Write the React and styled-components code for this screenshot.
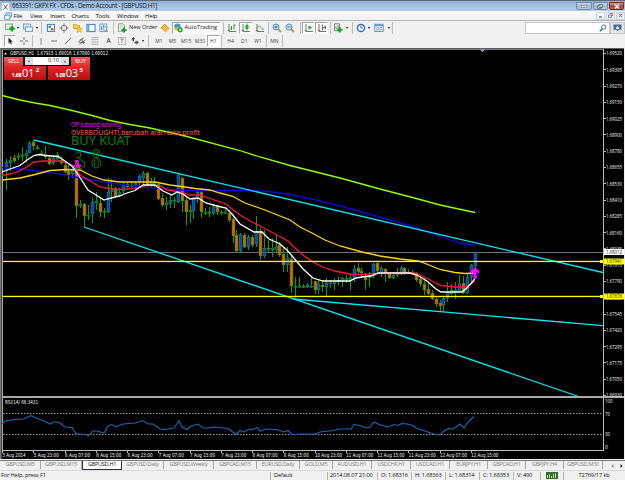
import React from "react";
import styled, { createGlobalStyle } from "styled-components";

const GlobalStyle = createGlobalStyle`
  * {
    box-sizing: border-box;
  }
  body {
    margin: 0;
    overflow: hidden;
    background: #f0f0f0;
  }
`;

const Window = styled.div`
  display: flex;
  flex-direction: column;
  width: 625px;
  height: 480px;
  background: #f0f0f0;
  font-family: "Open Sans", "Noto Sans", sans-serif;
  font-size: 6px;
  line-height: 1;
  color: #222;
  white-space: nowrap;
`;

const TitleBar = styled.div`
  display: flex;
  align-items: center;
  height: 11px;
  padding: 1px 1px 0 2px;
  border-top: 1px solid #5c6b7b;
  background: linear-gradient(#91afd2, #a3bfdf 40%, #b5cde8);
`;

const Title = styled.div`
  flex: 1;
  padding-left: 3px;
  font-size: 6.2px;
  letter-spacing: -0.27px;
  color: #101820;
`;

const WinButtons = styled.div`
  display: flex;
  align-self: flex-start;
  gap: 1px;
`;

const WinButton = styled.div`
  display: flex;
  align-items: center;
  justify-content: center;
  width: ${(p) => (p.$close ? 15 : 15.5)}px;
  height: 8px;
  border: 1px solid ${(p) => (p.$close ? "#7a3029" : "#7089a6")};
  border-radius: 0 0 2px 2px;
  background: ${(p) =>
    p.$close
      ? "linear-gradient(#dc9a8c, #c94029 50%, #c3513c)"
      : "linear-gradient(#c4d5e8, #9fb8d4 50%, #b4cbe4)"};
`;

const MenuBar = styled.div`
  display: flex;
  align-items: center;
  height: 10px;
  padding-left: 2px;
  border-bottom: 1px solid #b5b5b5;
  background: linear-gradient(#fafafa, #f0f0f0);
`;

const MenuItem = styled.div`
  width: ${(p) => p.$w}px;
  font-size: 6px;
  letter-spacing: -0.2px;
  color: #111;
`;

const ChildButton = styled.div`
  display: flex;
  align-items: center;
  justify-content: center;
  width: 9px;
  height: 8px;
  margin-left: 1px;
  border: 1px solid #c3d3e4;
  background: #f1f6fb;
`;

const Spacer = styled.div`
  flex: 1;
`;

const ToolBar = styled.div`
  display: flex;
  align-items: center;
  height: ${(p) => p.$h}px;
  padding-left: 3px;
  border-left: 1px solid #fff;
`;

const Tool = styled.div`
  display: flex;
  flex: none;
  align-items: center;
  justify-content: ${(p) => (p.$start ? "flex-start" : "center")};
  width: ${(p) => p.$w}px;
  height: 12px;
  border: 1px solid transparent;
  ${(p) =>
    p.$on &&
    `
    border-color: #a8a8a8 #fff #fff #a8a8a8;
    background: #fafafa;
  `}
  font-size: ${(p) => p.$size || 6}px;
  color: ${(p) => p.$color || "#222"};
  svg {
    flex: none;
    display: block;
  }
`;

const Caret = styled.i`
  flex: none;
  width: ${(p) => p.$w || 4}px;
  &::after {
    content: "";
    display: block;
    width: 0;
    margin: 0 auto;
    border: 1.5px solid transparent;
    border-top: 2px solid #111;
    border-bottom: 0;
  }
`;

const Divider = styled.i`
  flex: none;
  width: ${(p) => p.$w}px;
  height: 12px;
  &::after {
    content: "";
    display: block;
    width: 1px;
    height: 100%;
    margin: 0 auto;
    background: #bdbdbd;
  }
`;

const Search = styled.div`
  display: flex;
  align-items: center;
  justify-content: flex-end;
  width: 85px;
  height: 12px;
  padding-right: 2px;
  border: 1px solid #c6c6c6;
  background: #fff;
`;

const Chat = styled.div`
  display: flex;
  align-items: center;
  justify-content: center;
  width: 15px;
  height: 12px;
  border: 1px solid #c6c6c6;
  background: #e4e4e4;
`;

const ChartArea = styled.div`
  position: relative;
  height: 412px;
  svg {
    display: block;
  }
`;

const TradePanel = styled.div`
  position: absolute;
  left: 4px;
  top: 9px;
  width: 86px;
  color: #fff;
`;

const TradeRow = styled.div`
  display: flex;
  justify-content: space-between;
  height: ${(p) => p.$h}px;
`;

const TradeButton = styled.div`
  display: flex;
  align-items: center;
  justify-content: center;
  width: 19px;
  background: linear-gradient(#f85a5a, #e22c2c);
  font-size: 5.6px;
  letter-spacing: -0.1px;
`;

const Volume = styled.div`
  display: flex;
  align-items: center;
  justify-content: space-between;
  width: 44px;
  height: 8px;
  background: #fff;
  color: #111;
  font-size: 5.6px;
  span {
    flex: 1;
    padding-right: 2px;
    text-align: right;
  }
`;

const Step = styled.div`
  display: flex;
  align-items: center;
  justify-content: center;
  width: 8px;
  height: 8px;
  background: #d9dde4;
`;

const Quote = styled.div`
  display: flex;
  align-items: baseline;
  justify-content: center;
  width: 42.3px;
  gap: 0.5px;
  background: linear-gradient(#e02a2a, #b80d10);
  font-size: 5.6px;
  font-weight: 700;
  letter-spacing: -0.3px;
  line-height: 13px;
  b {
    font-size: 11px;
    font-weight: 400;
    letter-spacing: -0.2px;
  }
  sup {
    align-self: flex-start;
    margin-left: 1px;
    font-size: 6px;
    line-height: 9px;
  }
`;

const Tabs = styled.div`
  display: flex;
  height: 10px;
  border-top: 1px solid #777;
  background: #f0f0f0;
  font-size: 5.5px;
`;

const Tab = styled.div`
  display: flex;
  align-items: center;
  justify-content: center;
  width: ${(p) => p.$w}px;
  height: ${(p) => (p.$active ? 9 : 8)}px;
  letter-spacing: -0.26px;
  color: ${(p) => (p.$active ? "#111" : "#7c7c7c")};
  border: 0 solid #333;
  ${(p) =>
    p.$active
      ? "background: #fff; border-width: 0 1px 1px;"
      : "border-right: 1px solid #a5a5a5;"}
`;

const TabArrows = styled.div`
  display: flex;
  align-items: center;
  gap: 6px;
  padding-left: 8px;
`;

const StatusBar = styled.div`
  display: flex;
  align-items: center;
  height: 10px;
  border-top: 1px solid #dadada;
  color: #111;
  font-size: 5.7px;
  letter-spacing: -0.15px;
`;

const Status = styled.div`
  display: flex;
  align-items: center;
  justify-content: ${(p) => (p.$center ? "center" : "flex-start")};
  width: ${(p) => p.$w}px;
  height: 8px;
  padding-left: ${(p) => (p.$center ? 0 : p.$pad || 3)}px;
  border-right: ${(p) => (p.$last ? 0 : 1)}px solid #b4b4b4;
`;

const ICONS = {
  newChart: (
    <>
      <rect x="0.5" y="1" width="7" height="5.5" fill="#dff0df" stroke="#6d8f8c" strokeWidth="0.8" />
      <path d="M4.2 5.7h5.6M7 3v5.6" stroke="#12a51b" strokeWidth="2.2" />
    </>
  ),
  profiles: (
    <>
      <rect x="0.5" y="1" width="7" height="5" fill="#d6e8f8" stroke="#5c8fbd" strokeWidth="0.8" />
      <rect x="2.5" y="4" width="7" height="4.5" fill="#eaf4fc" stroke="#5c8fbd" strokeWidth="0.8" />
    </>
  ),
  market: (
    <>
      <rect x="1.4" y="1.4" width="7" height="7" fill="#fff" stroke="#2d84d2" />
      <path d="M2.6 2.6h2.4v2.4H2.6z" fill="#25a244" />
      <path d="M5 5h2.4v2.4H5z" fill="#e2552c" />
    </>
  ),
  target: (
    <>
      <circle cx="5" cy="5" r="2.8" fill="none" stroke="#777" strokeWidth="0.9" />
      <path d="M5 0.5v3M5 6.5v3M0.5 5h3M6.5 5h3" stroke="#777" strokeWidth="0.9" />
    </>
  ),
  navigator: (
    <>
      <path d="M0.5 1.5h3l1 1h2v3h-6z" fill="#f5cb50" stroke="#b98d1b" strokeWidth="0.6" />
      <path d="M6 3.5l1.2 1.8 2.2.4-1.6 1.5.3 2.1-2-1-2.1 1 .4-2.1L3 5.7l2-.4z" fill="#ffce3a" stroke="#b98d1b" strokeWidth="0.5" />
    </>
  ),
  terminal: (
    <>
      <rect x="1" y="1.4" width="8" height="7.2" fill="#fff" stroke="#3a76b8" />
      <path d="M1.5 1.5h2v7h-2z" fill="#67a4dc" />
    </>
  ),
  tester: (
    <>
      <rect x="0.8" y="1" width="7" height="7.5" fill="#d9e8f5" stroke="#6692bb" strokeWidth="0.8" />
      <path d="M2.5 7V3M4.5 6V2M6 7V4" stroke="#4b7cab" strokeWidth="0.8" />
      <circle cx="5.8" cy="5.6" r="1.8" fill="#fff" stroke="#4777a8" strokeWidth="0.7" />
      <path d="M7 7l2 2" stroke="#b78a2a" />
    </>
  ),
  order: (
    <>
      <path d="M1.5.8h4.5l1.5 1.5v6h-6z" fill="#f7fbf5" stroke="#718b70" strokeWidth="0.8" />
      <path d="M2.5 3h3.5M2.5 5h2" stroke="#899" strokeWidth="0.6" />
      <path d="M4.5 7h5M7 4.5v5" stroke="#14a51a" strokeWidth="2" />
    </>
  ),
  book: (
    <>
      <path d="M4.5 1L9 5.6 5.6 9 1 5.2z" fill="#f0bd3c" stroke="#a97512" strokeWidth="0.7" />
      <path d="M1.2 5.6L5.6 9l3-2.7" fill="none" stroke="#fff1c6" strokeWidth="0.6" />
    </>
  ),
  auto: (
    <>
      <circle cx="4.5" cy="3.8" r="3.3" fill="#3f9fd0" />
      <path d="M.8 4.5h7.4L6.5 7.8H2.5z" fill="#e7b93a" />
      <circle cx="7.2" cy="6.8" r="2.6" fill="#1daa2c" />
      <path d="M6.5 5.4v2.8L8.7 6.8z" fill="#fff" />
    </>
  ),
  bars: (
    <>
      <path d="M2 1v7.5h7M0.8 7.5h2" fill="none" stroke="#555" strokeWidth="0.8" />
      <path d="M4.5 3v4M4.5 6H3.5M7 1.5v5M7 2.2h1.5" stroke="#27953a" />
    </>
  ),
  candles: (
    <>
      <path d="M2 1v7.5h7M0.8 7.5h2" fill="none" stroke="#555" strokeWidth="0.8" />
      <path d="M6 .5v7" stroke="#157b20" strokeWidth="0.8" />
      <rect x="4.5" y="2" width="3" height="4" fill="#1eb52b" />
    </>
  ),
  line: (
    <>
      <path d="M2 1v7.5h7M0.8 7.5h2" fill="none" stroke="#555" strokeWidth="0.8" />
      <path d="M2 5.5C4 2 5 2.5 6 4.5S8 6 9 6" fill="none" stroke="#47a957" strokeWidth="0.9" />
    </>
  ),
  zoomIn: (
    <>
      <path d="M6 6l3 3" stroke="#c59b29" strokeWidth="1.8" />
      <circle cx="4" cy="4" r="3" fill="#d8ecfa" stroke="#4a90cb" />
      <path d="M2.3 4h3.4M4 2.3v3.4" stroke="#2e73b3" />
    </>
  ),
  zoomOut: (
    <>
      <path d="M6 6l3 3" stroke="#c59b29" strokeWidth="1.8" />
      <circle cx="4" cy="4" r="3" fill="#d8ecfa" stroke="#4a90cb" />
      <path d="M2.3 4h3.4" stroke="#2e73b3" />
    </>
  ),
  scroll: (
    <>
      <path d="M2 1v7.5h7M0.8 7.5h2" fill="none" stroke="#555" strokeWidth="0.8" />
      <path d="M4.5 2.5v4L8 4.5z" fill="#1ca62b" />
    </>
  ),
  shift: (
    <>
      <path d="M2 1v7.5h7M0.8 7.5h2M5.5 1.5v6" fill="none" stroke="#555" strokeWidth="0.8" />
      <path d="M9 2.5v4L6 4.5z" fill="#3a78b8" />
      <path d="M6 4.5h3" stroke="#c44" strokeWidth="0.8" />
    </>
  ),
  indicator: (
    <>
      <path d="M1.5.8h5v7h-5z" fill="#eef4ee" stroke="#667" strokeWidth="0.8" />
      <path d="M3 6V3M5 6V2" stroke="#667" strokeWidth="0.7" />
      <path d="M4 6.8h5.4M6.7 4v5.6" stroke="#14a51a" strokeWidth="2" />
    </>
  ),
  clock: (
    <>
      <circle cx="5" cy="5" r="3.6" fill="#edf6fd" stroke="#2d73bc" strokeWidth="1.5" />
      <path d="M5 2.8V5h1.8" fill="none" stroke="#335" strokeWidth="0.7" />
    </>
  ),
  template: (
    <>
      <rect x="0.8" y="1.2" width="8.4" height="7.4" fill="#e7f1fa" stroke="#4e87bd" strokeWidth="0.8" />
      <path d="M1 1.4h8v1.8H1z" fill="#5d9ad3" />
      <path d="M2 5.5l1.5-1 1.5 1 2-1.3 1.3.8" fill="none" stroke="#c55" strokeWidth="0.6" />
      <path d="M2 7.3l2-.8 2 .6 2-.8" fill="none" stroke="#3a9a4a" strokeWidth="0.6" />
    </>
  ),
  cursor: <path d="M3.5 1.5v6l1.4-1.3 1 2.3 1-.5-1-2.2h1.8z" fill="#222" />,
  cross: <path d="M5 1v3M5 6v3M1 5h3M6 5h3" stroke="#666" strokeWidth="0.9" />,
  vline: <path d="M5 2v6.5" stroke="#777" strokeWidth="0.9" />,
  hline: <path d="M2 5h6" stroke="#666" strokeWidth="0.9" />,
  trend: <path d="M2 8l6-6" stroke="#555" strokeWidth="0.8" />,
  channel: (
    <path d="M1 6l6-4.5M2.5 8.5l6-4.5M3 3l4 5M5 2l1.5 6M2 6.5h6" stroke="#555" strokeWidth="0.7" />
  ),
  fibo: <path d="M1.5 1.5h7M1.5 3.7h7M1.5 6h7M1.5 8.2h7" stroke="#777" strokeWidth="0.7" strokeDasharray="1.3 .4" />,
  label: <rect x="1.5" y="1.5" width="7" height="7" fill="none" stroke="#777" strokeWidth="0.7" strokeDasharray="1 .6" />,
  arrows: (
    <>
      <path d="M1 3.5L3.3 1l2 2.3H4v2H2.5v-2z" fill="#444" />
      <path d="M4.5 5.5h2V4.3L9 6.5 6.5 8.7V7.5h-2z" fill="#555" />
    </>
  ),
};

const Glyph = ({ name }) => (
  <svg width="10" height="10" viewBox="0 0 10 10">
    {ICONS[name]}
  </svg>
);

// high, low, body top, body bottom, colour (b: up, o: down, g: doji)
const CANDLES = [
  [159, 190, 162, 171, "b"], [156, 171, 160, 163, "b"], [155, 163, 157.5, 161, "o"], [153, 160, 156, 157.5, "g"],
  [147, 161, 155, 156.5, "g"], [150, 163, 153, 156, "b"], [141, 153, 143, 153, "b"], [140, 150, 142, 146, "o"],
  [145, 150, 147, 149, "g"], [150, 155, 153, 154.5, "g"], [146, 159, 154, 157, "o"], [156, 165, 158, 164, "o"],
  [157, 165, 158, 163, "b"], [152, 160, 155, 159, "g"], [157, 165, 160, 163, "o"], [162, 173, 165, 172, "o"],
  [165, 180, 171, 176, "o"], [167, 178, 170, 174, "b"], [170, 218, 171, 206, "o"], [200, 208, 204, 206, "b"],
  [203, 227, 204, 216, "o"], [205, 220, 215, 216.5, "g"], [197, 223, 202, 214, "b"], [192, 210, 201, 203, "g"],
  [198, 217, 203, 212, "o"], [208, 218, 211, 212.5, "g"], [178, 213, 192, 212, "b"], [179, 202, 188, 192, "b"],
  [187, 197, 188, 196, "o"], [188, 197, 192, 196, "b"], [183, 194, 185, 191, "b"], [182, 188, 184, 187, "o"],
  [182, 189, 185, 187, "g"], [181, 188, 183, 186, "b"], [174, 187, 176, 182, "b"], [171, 185, 173, 178, "b"],
  [172, 187, 173, 185, "o"], [178, 187, 182, 184, "b"], [177, 187, 183, 184, "g"], [183, 200, 184, 199, "o"],
  [193, 207, 198, 205, "o"], [197, 210, 203, 205, "b"], [195, 208, 200, 204, "b"], [197, 208, 200, 201.5, "g"],
  [174, 203, 175, 202, "b"], [177, 212, 178, 201, "o"], [197, 225, 200, 212, "o"], [205, 223, 210, 212, "g"],
  [197, 219, 198, 211, "b"], [190, 203, 192, 199, "b"], [190, 218, 192, 212, "o"], [208, 215, 212, 213.5, "g"],
  [207, 217, 212, 213.5, "b"], [205, 215, 207, 213, "b"], [205, 215, 207, 212, "o"], [210, 215, 212, 213.5, "g"],
  [209, 214, 212, 213.5, "g"], [210, 222, 213, 220, "o"], [215, 243, 219, 236, "o"], [230, 252, 235, 251, "o"],
  [233, 253, 234, 251, "b"], [233, 248, 235, 247, "o"], [235, 250, 237, 247, "b"], [235, 247, 237, 245, "o"],
  [216, 247, 231, 244, "b"], [228, 260, 231, 256, "o"], [230, 258, 248, 256, "b"], [240, 252, 248, 249.5, "o"],
  [238, 257, 248, 250, "g"], [235, 252, 247, 250, "b"], [242, 257, 245, 255, "o"], [247, 272, 254, 265, "o"],
  [247, 272, 258, 265, "b"], [255, 293, 259, 286, "o"], [277, 298, 286, 287.5, "g"], [277, 288, 286, 287.5, "b"],
  [284, 288, 286, 287.5, "g"], [283, 288, 285, 287.5, "b"], [277, 288, 286, 287.5, "g"], [281, 294, 281, 290, "o"],
  [280, 294, 284, 290, "b"], [280, 292, 285, 287, "o"], [278, 297, 283, 287, "b"], [280, 288, 283, 284, "g"],
  [278, 290, 281, 284, "b"], [277, 285, 280, 282, "o"], [277, 287, 278, 281, "b"], [275, 283, 278, 279.5, "g"],
  [275, 290, 278, 280, "g"], [265, 282, 269, 279, "b"], [263, 273, 268, 272, "o"], [268, 278, 271, 273, "o"],
  [273, 290, 276, 280, "o"], [272, 287, 275, 278, "b"], [263, 278, 264, 276, "b"], [262, 273, 263, 271, "o"],
  [266, 277, 268, 273, "b"], [268, 282, 269, 273, "o"], [272, 279, 273, 278, "o"], [272, 279, 275, 278, "b"],
  [268, 277, 272, 275, "b"], [266, 275, 268, 273, "b"], [267, 275, 268, 273, "o"], [269, 273, 272, 273, "g"],
  [270, 275, 272, 273.5, "b"], [272, 282, 273, 280, "o"], [276, 287, 279, 284, "o"], [278, 295, 284, 290, "o"],
  [283, 295, 289, 294, "o"], [290, 300, 293, 299, "o"], [296, 307, 299, 304, "o"], [300, 312, 303, 306, "o"],
  [297, 311, 298, 305, "b"], [282, 302, 292, 298, "b"], [284, 295, 290, 294, "g"], [282, 299, 290, 293, "b"],
  [275, 292, 284, 291, "b"], [276, 294, 283, 293, "o"], [273, 294, 277, 293, "b"], [264, 282, 265, 277, "b"],
  [252, 279, 252.5, 266, "b"],
];

const BODY = { b: "#1030ff", o: "#ff5000", g: "#0a5a0a" };

const LINES = [
  { color: "#8fff00", d: "2,95.5 20,100 35,103 50,105.5 70,110 90,115 110,120.5 130,124.5 150,128 185,136 238,150 260,157 290,165.5 340,178 380,189 420,199.5 440,205 475,212.5" },
  { color: "#0a0adc", d: "2,167.5 30,170 60,174 80,178 105,182 125,185 140,186.5 155,188 170,189.5 185,190.5 240,190.5 265,191 290,194.5 316,200 340,206 365,213 390,220 415,227 430,233 445,238 460,243 475,245.5" },
  { color: "#ffd400", d: "2,180 20,178 35,174.5 50,170.5 65,169.5 80,170 92,176 104,180 120,182 155,182 170,185 185,187 195,188.5 210,190 220,193 232,196 245,203 265,210 290,220 300,227 312,233 325,240 340,246 362,252 380,256 400,259 418,261 428,264.5 440,269.5 455,272.5 465,273.5 475,273" },
  { color: "#ff1438", d: "2,175.5 15,173 25,168 34,162 43,161 60,161 72,165 80,175 92,182 100,187 115,189.5 127,189 138,188 148,185 160,186 168,190 180,192 190,195 200,195 210,198.5 226,204 232,209 240,215 250,221 262,227 275,234 288,241 294,247 303,255 313,262 323,267 335,271 352,274.5 370,274 385,273 415,273 422,276 432,281 441,285.5 455,287 465,287 471,284 475,281" },
  { color: "#fff", d: "2,172 10,169 20,165.5 27,160 34,155.5 39,154.5 45,155.5 58,156.5 65,161 73,167 79,176 88,190 96,195 104,200 107,199 115,197 120,196 127,193 135,190.5 143,185 155,185 163,191 172,195 177,192 183,194 190,199 198,198 206,203 215,205.5 226,208 232,214 240,224 254,232 262,232 269,239 280,244 287,250 293,257 303,269 313,278 323,281 350,281 356,278 365,276.5 371,276 378,273 410,273 417,275 427,281 436,289 441,292 462,292 468,287 474,280 476,276" },
];

const RSI =
  "2,424 5,421 14,419.5 24,419 31,415.5 36,418 44,421 50,424 54,421.5 60,423 65,427 72,427.5 76,434 81,434 89,435.5 93,431 97,431 104,433 108,426 112,424.5 116,427 123,424 135,423 143,420.5 148,424 153,424 160,429 165,429.5 174,428 179,420.5 182,427 187,429.5 191,426 198,424 203,428 209,428 214,427 228,428.5 236,434.5 240,430.5 244,432 249,429 252,430 257,427.5 260,431 266,429 276,429.5 284,432 288,430.5 292,434.5 304,434 315,434 320,432 333,430.5 340,429 351,429 354,424.5 360,425.5 366,428 370,427 374,422 379,424.5 388,427 394,424.5 398,425.5 402,423.5 407,424 412,425 416,428 425,431 434,434 440,435 444,431 448,428.5 453,429 460,424 464,428 468,422 474,416.5";

const PRICES = [
  "1.69520", "1.69395", "1.69270", "1.69150", "1.69025", "1.68900", "1.68780", "1.68655", "1.68530",
  "1.68410", "1.68285", "1.68160", "1.68035", "1.67915", "1.67790", "1.67665", "1.67545", "1.67420",
  "1.67295", "1.67175", "1.67050", "1.66930",
];

const TIMES = [
  "5 Aug 2014", "5 Aug 23:00", "6 Aug 07:00", "6 Aug 15:00", "6 Aug 23:00", "7 Aug 07:00", "7 Aug 15:00",
  "7 Aug 23:00", "8 Aug 07:00", "8 Aug 15:00", "10 Aug 23:00", "11 Aug 07:00", "11 Aug 15:00",
  "11 Aug 23:00", "12 Aug 07:00", "12 Aug 15:00",
];

const Label = styled.text.attrs({ lengthAdjust: "spacingAndGlyphs" })`
  font-family: "DejaVu Sans Condensed", "DejaVu Sans", sans-serif;
  font-size: ${(p) => p.$size || 5.6}px;
  fill: ${(p) => p.$color || "#f4f4f4"};
`;

const Price = styled(Label)`
  font-family: "Open Sans", "Noto Sans", sans-serif;
  font-size: 5px;
`;

const Note = styled(Label)`
  font-family: "Noto Sans", "Open Sans", sans-serif;
`;

const Chart = () => (
  <svg width="625" height="412" viewBox="0 48 625 412">
    <rect y="48" width="625" height="412" fill="#f0f0f0" />
    <rect x="1" y="48" width="623" height="411" fill="#000" />
    <rect y="47.5" width="624" height="1.5" fill="#5f5f5f" />
    <rect x="0" y="48" width="1" height="411" fill="#777" />
    <rect x="1" y="49" width="1" height="410" fill="#444" />
    <rect x="2" y="49" width="1" height="402" fill="#aaa" />
    <rect x="2" y="49" width="601" height="1" fill="#777" />
    <path d="M480 49.5h5L482.5 52z" fill="#9fb4c8" />

    <rect x="3" y="252" width="600" height="1" fill="#66717d" />
    {CANDLES.map(([hi, lo, top, bottom, kind], i) => {
      const x = Math.round(5 + i * 3.906);
      const h = bottom - top;
      return (
        <g key={i}>
          <rect x={x + 1} y={hi} width="1" height={lo - hi} fill="#0aa00a" />
          <rect x={x - 0.2} y={top} width="3.4" height={h} fill="#00a800" />
          <rect x={x + 0.4} y={top + 0.5} width="2.2" height={Math.max(h - 1, 0.5)} fill={BODY[kind]} />
        </g>
      );
    })}
    {LINES.map((line) => (
      <polyline key={line.color} points={line.d} fill="none" stroke={line.color} strokeWidth="1.3" />
    ))}
    <g stroke="#00e8f0" strokeWidth="1.3">
      <path d="M34 140L603 272.5" />
      <path d="M84 227L580 397" />
      <path d="M293 299L603 325.7" />
    </g>
    <rect x="3" y="260.8" width="600" height="1.3" fill="#ff0" />
    <rect x="3" y="295.8" width="600" height="1.3" fill="#ff0" />

    <path d="M75 160h4v5h3l-5 6-5-6h3z" fill="#ff00e8" />
    <path d="M475 267l5 5-1.5 1.5-2-1.5v7h-3v-7l-2 1.5-1.5-1.5z" fill="#ff00ff" />
    <g fill="none" stroke="#0a6a0a" strokeWidth="1.1">
      <path d="M75.5 153.5l5-1.5v4.5l-3 1 7 5v4l-3.5 2h-4l-2-3 4-5" />
      <ellipse cx="96.3" cy="153.5" rx="3.8" ry="4" />
      <ellipse cx="96.3" cy="163" rx="4.5" ry="4.7" />
      <path d="M95 151v4M97.5 151v4M94.5 160v6M98 160v6" />
    </g>
    <Note x="71" y="126.5" textLength="50" $size={6.8} $color="#f0f">OP lubang kosong</Note>
    <Note x="71" y="134.8" textLength="129" $size={7.8} $color="#ff6347">OVERBOUGHT!,berubah arah take profit</Note>
    <Note x="71" y="145" textLength="60" $size={12} $color="#078007">BUY KUAT</Note>
    <path d="M4 54.5h3L5.5 52.5z" fill="#fff" />
    <Label x="10" y="55" textLength="98">GBPUSD,H1&nbsp; 1.67915 1.68016 1.67880 1.68012</Label>

    <rect x="2" y="396" width="622" height="2" fill="#aaa" />
    <Label x="5" y="404" textLength="33">RSI(14) 66.3431</Label>
    <path d="M3 413.5h600M3 434.5h600" stroke="#a8a8a8" strokeDasharray="1.5 1.5" strokeWidth="0.9" />
    <polyline points={RSI} fill="none" stroke="#1869b5" strokeWidth="1.1" />
    <rect x="2" y="450" width="602" height="1" fill="#bbb" />
    <rect x="603" y="49" width="1" height="402" fill="#bbb" />

    {PRICES.map((price, i) => (
      <g key={price}>
        <rect x="604" y={Math.round(53 + i * 16.285)} width="2" height="1" fill="#bbb" />
        <Price x="606" y={55.4 + i * 16.285} textLength="16">{price}</Price>
      </g>
    ))}
    <rect x="604" y="249" width="20" height="6" fill="#fff" />
    <Price x="606" y="254" textLength="16" $color="#111">1.68012</Price>
    <rect x="604" y="258.5" width="20" height="6" fill="#ff0" />
    <Price x="606" y="263.4" textLength="16" $color="#111">1.67941</Price>
    <rect x="604" y="293.5" width="20" height="6" fill="#ff0" />
    <Price x="606" y="298.4" textLength="16" $color="#111">1.67676</Price>
    <rect x="600" y="260" width="3" height="3" fill="#ff0" />
    <rect x="600" y="295" width="3" height="3" fill="#ff0" />
    <Price x="605" y="403.2" textLength="7.5">100</Price>
    <Price x="605" y="415.5" textLength="5">70</Price>
    <Price x="605" y="436.3" textLength="5">30</Price>
    <Price x="605" y="449">0</Price>
    {TIMES.map((time, i) => (
      <g key={time}>
        <rect x={Math.round(2 + i * 31.25)} y="451" width="1" height="2" fill="#bbb" />
        <Label x={2.5 + i * 31.25} y="457" textLength={time.length > 11 ? 27 : time.length > 10 ? 25 : 23}>
          {time}
        </Label>
      </g>
    ))}
  </svg>
);

const MENU = [["File", 16.5], ["View", 20], ["Insert", 21.5], ["Charts", 24], ["Tools", 21.5], ["Window", 28], ["Help", 20]];

const TABS = [
  ["GBPUSD,M5", 41], ["GBPUSD,M15", 41], ["GBPUSD,H1", 40, true], ["GBPUSD,Daily", 42], ["GBPUSD,Weekly", 50],
  ["GBPCAD,M15", 43], ["EURUSD,Daily", 43], ["GOLD,M5", 33], ["AUDUSD,H1", 39], ["USDCHF,H1", 39],
  ["USDCAD,H1", 39], ["EURJPY,H1", 38], ["GBPCAD,H1", 38], ["GBPJPY,H4", 38], ["GBPUSD,M30", 39],
];

export default function App() {
  return (
    <>
      <GlobalStyle />
      <Window>
        <TitleBar>
          <svg width="7" height="8" viewBox="0 0 7 8">
            <rect width="7" height="8" fill="#fff" />
            <path d="M1.5 1.5l4 5M5.5 1.5l-4 5" stroke="#345" strokeWidth="0.9" />
          </svg>
          <Title>663391: GKFX FX - CFDs - Demo Account - [GBPUSD,H1]</Title>
          <WinButtons>
            <WinButton>
              <svg width="6" height="3"><rect x=".5" y=".5" width="5" height="2" fill="#fff" stroke="#667" strokeWidth="0.6" /></svg>
            </WinButton>
            <WinButton>
              <svg width="6" height="5"><path d="M2 .5h3.5v3H2zM.5 1.8H4v2.7H.5z" fill="#fff" stroke="#556" strokeWidth="0.7" /></svg>
            </WinButton>
            <WinButton $close>
              <svg width="6" height="5"><path d="M1 .5l4 4M5 .5l-4 4" stroke="#fff" strokeWidth="1.5" /></svg>
            </WinButton>
          </WinButtons>
        </TitleBar>
        <MenuBar>
          <Tool $w={11.5}>
            <svg width="8" height="8" viewBox="0 0 8 8">
              <path d="M2 .8h5.5v4H2z" fill="#d6e8f8" stroke="#4d8bc0" strokeWidth="0.8" />
              <path d="M.5 3.2H6v4H.5z" fill="#eaf4fc" stroke="#4d8bc0" strokeWidth="0.8" />
            </svg>
          </Tool>
          {MENU.map(([label, w]) => (
            <MenuItem key={label} $w={w}>{label}</MenuItem>
          ))}
          <Spacer />
          <ChildButton><svg width="5" height="5"><path d="M1 4h3" stroke="#345" /></svg></ChildButton>
          <ChildButton><svg width="5" height="5"><path d="M1.5.5h3v2.5M.5 2h3v2.5h-3z" fill="none" stroke="#456" strokeWidth="0.7" /></svg></ChildButton>
          <ChildButton><svg width="5" height="5"><path d="M.8.8l3.4 3.4M4.2.8L.8 4.2" stroke="#456" strokeWidth="0.9" /></svg></ChildButton>
        </MenuBar>
        <ToolBar $h={13}>
          <Tool $w={12}><Glyph name="newChart" /></Tool>
          <Caret />
          <Tool $w={15}><Glyph name="profiles" /></Tool>
          <Caret $w={3} />
          <Divider $w={6} />
          <Tool $w={13}><Glyph name="market" /></Tool>
          <Tool $w={14}><Glyph name="target" /></Tool>
          <Tool $w={13}><Glyph name="navigator" /></Tool>
          <Tool $w={13}><Glyph name="terminal" /></Tool>
          <Tool $w={14}><Glyph name="tester" /></Tool>
          <Divider $w={5} />
          <Tool $w={12}><Glyph name="order" /></Tool>
          <Tool $w={30} $start $size={5.5}>New Order</Tool>
          <Tool $w={14}><Glyph name="book" /></Tool>
          <Tool $w={49} $on $start $size={5.7}>
            <Glyph name="auto" />
            &nbsp;AutoTrading
          </Tool>
          <Divider $w={4} />
          <Tool $w={14}><Glyph name="bars" /></Tool>
          <Tool $w={14} $on><Glyph name="candles" /></Tool>
          <Tool $w={13}><Glyph name="line" /></Tool>
          <Divider $w={5} />
          <Tool $w={11}><Glyph name="zoomIn" /></Tool>
          <Tool $w={16}><Glyph name="zoomOut" /></Tool>
          <Divider $w={4} />
          <Tool $w={13} $on><Glyph name="scroll" /></Tool>
          <Tool $w={13} $on><Glyph name="shift" /></Tool>
          <Divider $w={4} />
          <Tool $w={12}><Glyph name="indicator" /></Tool>
          <Caret $w={5} />
          <Divider $w={6} />
          <Tool $w={12}><Glyph name="clock" /></Tool>
          <Caret />
          <Tool $w={16}><Glyph name="template" /></Tool>
          <Caret $w={3} />
          <Divider $w={4} />
          <Spacer />
          <Search>
            <svg width="8" height="8" viewBox="0 0 8 8">
              <circle cx="4.8" cy="3" r="2.1" fill="none" stroke="#3f6fc4" />
              <path d="M3.2 4.8L.8 7.2" stroke="#2951a8" strokeWidth="1.3" />
            </svg>
          </Search>
          <Chat>
            <svg width="9" height="8" viewBox="0 0 9 8">
              <path d="M.5.5h8v5.3H5.5L4.5 7.5l-1-1.7h-3z" fill="#4966a3" />
              <path d="M4.5 1.5l1.7 3.5H2.8z" fill="#fff" />
            </svg>
          </Chat>
        </ToolBar>
        <ToolBar $h={14}>
          <Tool $w={12} $on><Glyph name="cursor" /></Tool>
          <Tool $w={15}><Glyph name="cross" /></Tool>
          <Divider $w={3} />
          <Tool $w={13}><Glyph name="vline" /></Tool>
          <Tool $w={14}><Glyph name="hline" /></Tool>
          <Tool $w={14}><Glyph name="trend" /></Tool>
          <Tool $w={13}><Glyph name="channel" /></Tool>
          <Tool $w={14}><Glyph name="fibo" /></Tool>
          <Tool $w={13} $size={6.5}>A</Tool>
          <Tool $w={14}>
            <svg width="10" height="10" viewBox="0 0 10 10">
              {ICONS.label}
              <Label x="3.3" y="7.2" $size={6} $color="#444">T</Label>
            </svg>
          </Tool>
          <Tool $w={12}><Glyph name="arrows" /></Tool>
          <Caret />
          <Divider $w={7} />
          {["M1", "M5", "M15", "M30"].map((t) => (
            <Tool key={t} $w={13.7} $size={5} $color="#444">{t}</Tool>
          ))}
          <Tool $w={13} $on $size={5} $color="#444">H1</Tool>
          <Divider $w={4} />
          {["H4", "D1", "W1"].map((t) => (
            <Tool key={t} $w={13.7} $size={5} $color="#444">{t}</Tool>
          ))}
          <Divider $w={3} />
          <Tool $w={13} $size={5} $color="#444">MN</Tool>
          <Divider $w={3} />
        </ToolBar>
        <ChartArea>
          <Chart />
          <TradePanel>
            <TradeRow $h={9}>
              <TradeButton>SELL</TradeButton>
              <Volume>
                <Step><svg width="4" height="3"><path d="M.8.8h2.4L2 2.3z" fill="#345" /></svg></Step>
                <span>0.10</span>
                <Step><svg width="4" height="3"><path d="M.8 2.3h2.4L2 .8z" fill="#345" /></svg></Step>
              </Volume>
              <TradeButton>BUY</TradeButton>
            </TradeRow>
            <TradeRow $h={14}>
              <Quote>1.68 <b>01</b><sup>2</sup></Quote>
              <Quote>1.68 <b>03</b><sup>5</sup></Quote>
            </TradeRow>
          </TradePanel>
        </ChartArea>
        <Tabs>
          {TABS.map(([label, w, active]) => (
            <Tab key={label} $w={w} $active={active}>{label}</Tab>
          ))}
          <TabArrows>
            <svg width="3" height="4"><path d="M2.5 0v4L.5 2z" fill="#888" /></svg>
            <svg width="3" height="4"><path d="M.5 0v4l2-2z" fill="#111" /></svg>
          </TabArrows>
        </Tabs>
        <StatusBar>
          <Status $w={271} $pad={1}>For Help, press F1</Status>
          <Status $w={57}>Default</Status>
          <Status $w={50} $pad={2}>2014.08.07 21:00</Status>
          <Status $w={34}>O: 1.68316</Status>
          <Status $w={34}>H: 1.68363</Status>
          <Status $w={34}>L: 1.68314</Status>
          <Status $w={34}>C: 1.68353</Status>
          <Status $w={27}>V: 490</Status>
          <Status $w={23} $center>
            <svg width="12" height="7" viewBox="0 0 12 7">
              <rect width="12" height="7" fill="#2e6e3e" />
              <path d="M1.5 6V3M3.5 6V2.5M5.5 6V4M7.5 6V2M9.5 6V1.5" stroke="#c8e070" strokeWidth="1" />
            </svg>
          </Status>
          <Status $w={60} $center $last>72769/17 kb</Status>
        </StatusBar>
      </Window>
    </>
  );
}
